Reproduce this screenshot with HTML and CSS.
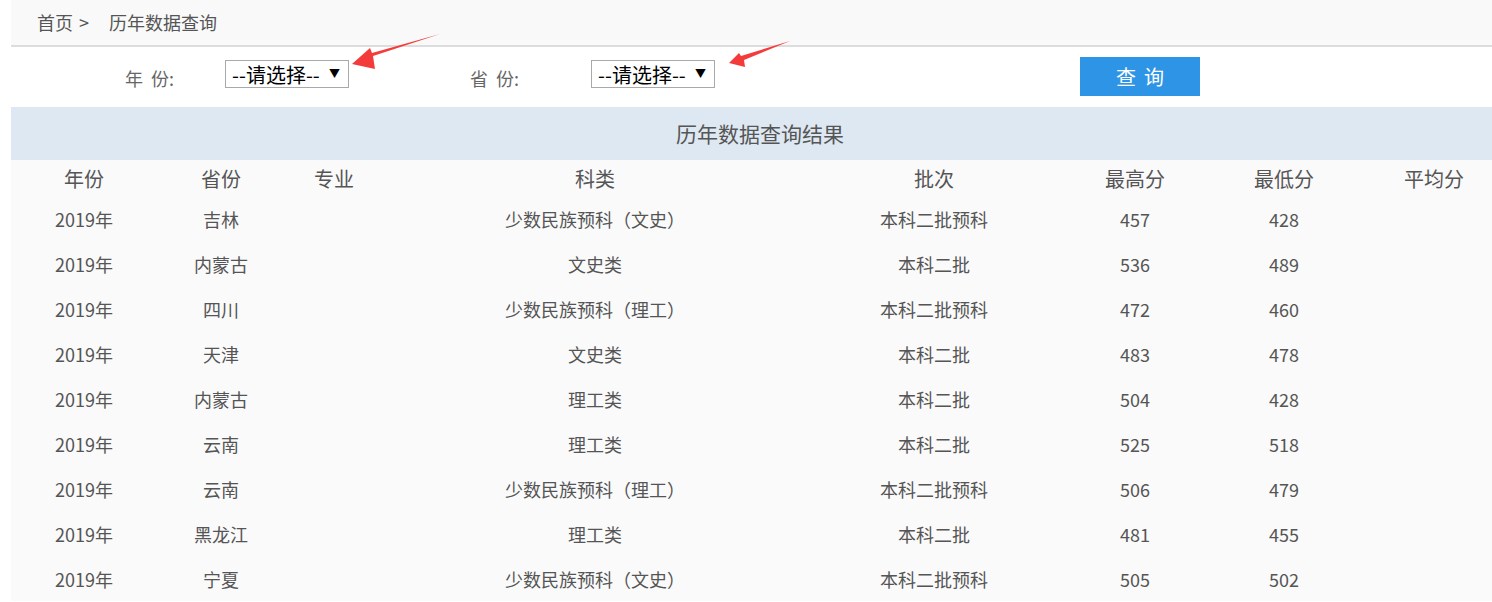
FILE: index.html
```html
<!DOCTYPE html>
<html>

<head>
	<meta charset="UTF-8">
	<title>历年数据查询</title>
	<link rel="stylesheet" href="styles.css">
</head>

<body>
	<div class="page">
		<div class="crumbs">
			<a href="#">首页</a><span class="sep">&gt;</span><span class="here">历年数据查询</span>
		</div>

		<form class="filter" onsubmit="return false">
			<label class="label label-year" for="year">年&nbsp;&nbsp;份:</label>
			<div class="pick">
				<select id="year" name="year">
					<option>--请选择--</option>
					<option>2019</option>
					<option>2018</option>
				</select>
			</div>
			<label class="label label-prov" for="prov">省&nbsp;&nbsp;份:</label>
			<div class="pick">
				<select id="prov" name="prov">
					<option>--请选择--</option>
				</select>
			</div>
			<button type="submit" class="button">查询</button>
		</form>

		<!-- the two red arrows from the screenshot -->
		<svg class="arrow arrow-one" width="100" height="40" viewBox="0 0 100 40">
			<polygon points="100,1 33,23 35,36 12,31 30,15 32,20" fill="#f43b3b" />
		</svg>
		<svg class="arrow arrow-two" width="70" height="30" viewBox="0 0 70 30">
			<polygon points="70,1 24,20 25,27 9,23 19,13 21,16" fill="#f43b3b" />
		</svg>

		<div class="result-title">历年数据查询结果</div>

		<table class="result">
			<colgroup>
				<col style="width:146px">
				<col style="width:128px">
				<col style="width:98px">
				<col style="width:424px">
				<col style="width:254px">
				<col style="width:148px">
				<col style="width:150px">
				<col style="width:150px">
			</colgroup>
			<thead>
				<tr>
					<th>年份</th>
					<th>省份</th>
					<th>专业</th>
					<th>科类</th>
					<th>批次</th>
					<th>最高分</th>
					<th>最低分</th>
					<th>平均分</th>
				</tr>
			</thead>
			<tbody>
				<tr><td>2019年</td><td>吉林</td><td></td><td>少数民族预科（文史）</td><td>本科二批预科</td><td>457</td><td>428</td><td></td></tr>
				<tr><td>2019年</td><td>内蒙古</td><td></td><td>文史类</td><td>本科二批</td><td>536</td><td>489</td><td></td></tr>
				<tr><td>2019年</td><td>四川</td><td></td><td>少数民族预科（理工）</td><td>本科二批预科</td><td>472</td><td>460</td><td></td></tr>
				<tr><td>2019年</td><td>天津</td><td></td><td>文史类</td><td>本科二批</td><td>483</td><td>478</td><td></td></tr>
				<tr><td>2019年</td><td>内蒙古</td><td></td><td>理工类</td><td>本科二批</td><td>504</td><td>428</td><td></td></tr>
				<tr><td>2019年</td><td>云南</td><td></td><td>理工类</td><td>本科二批</td><td>525</td><td>518</td><td></td></tr>
				<tr><td>2019年</td><td>云南</td><td></td><td>少数民族预科（理工）</td><td>本科二批预科</td><td>506</td><td>479</td><td></td></tr>
				<tr><td>2019年</td><td>黑龙江</td><td></td><td>理工类</td><td>本科二批</td><td>481</td><td>455</td><td></td></tr>
				<tr><td>2019年</td><td>宁夏</td><td></td><td>少数民族预科（文史）</td><td>本科二批预科</td><td>505</td><td>502</td><td></td></tr>
			</tbody>
		</table>
	</div>
</body>

</html>
```

FILE: styles.css
```css
html {
	overflow: hidden;
}

body {
	margin: 0;
	background: #fff;
	color: #555;
	font-family: "Microsoft YaHei", "Noto Sans CJK SC", "Noto Sans", sans-serif;
}

.page {
	position: relative;
	width: 1498px;
	margin-left: 11px;
}

.crumbs {
	height: 45px;
	line-height: 44px;
	padding-left: 26px;
	font-size: 18px;
	background: #f9f9f9;
	border-bottom: 2px solid #ddd;
}

.crumbs a {
	color: #555;
	text-decoration: none;
}

.sep {
	margin-left: 6px;
	margin-right: 20px;
}

.filter {
	display: flex;
	align-items: center;
	height: 60px;
	padding-left: 114px;
	background: #fff;
}

.label {
	font-size: 18px;
	color: #666;
	padding-top: 2px;
}

.label-year {
	width: 100px;
}

.label-prov {
	width: 121px;
	margin-left: 121px;
}

.pick {
	position: relative;
	margin-top: -6px;
}

.pick select {
	appearance: none;
	-webkit-appearance: none;
	width: 124px;
	height: 28px;
	margin: 0;
	padding: 2px 0 0 6px;
	border: 1px solid #a9a9a9;
	border-radius: 0;
	background: #fff;
	color: #000;
	font-size: 20px;
	font-family: "Microsoft YaHei", "Noto Sans CJK SC", sans-serif;
	line-height: 24px;
}

.pick::after {
	content: "\25BC";
	position: absolute;
	right: 9px;
	top: 5px;
	font-size: 11px;
	color: #000;
	pointer-events: none;
}

.button {
	width: 120px;
	height: 39px;
	margin-left: 365px;
	margin-top: -2px;
	border: none;
	background: #2e95e6;
	color: #fff;
	font-size: 20px;
	letter-spacing: 8px;
	text-indent: 8px;
	font-family: "Microsoft YaHei", "Noto Sans CJK SC", sans-serif;
}

.arrow {
	position: absolute;
}

.arrow-one {
	left: 329px;
	top: 33px;
}

.arrow-two {
	left: 709px;
	top: 40px;
}

.result-title {
	height: 53px;
	line-height: 52px;
	text-align: center;
	font-size: 21px;
	background: #dee8f2;
}

.result {
	width: 1498px;
	table-layout: fixed;
	border-collapse: collapse;
	background: #fafafa;
}

th {
	height: 36px;
	padding: 0;
	font-size: 20px;
	font-weight: normal;
	text-align: center;
	vertical-align: middle;
}

td {
	height: 45px;
	padding: 0;
	font-size: 18px;
	text-align: center;
	vertical-align: middle;
}
```
